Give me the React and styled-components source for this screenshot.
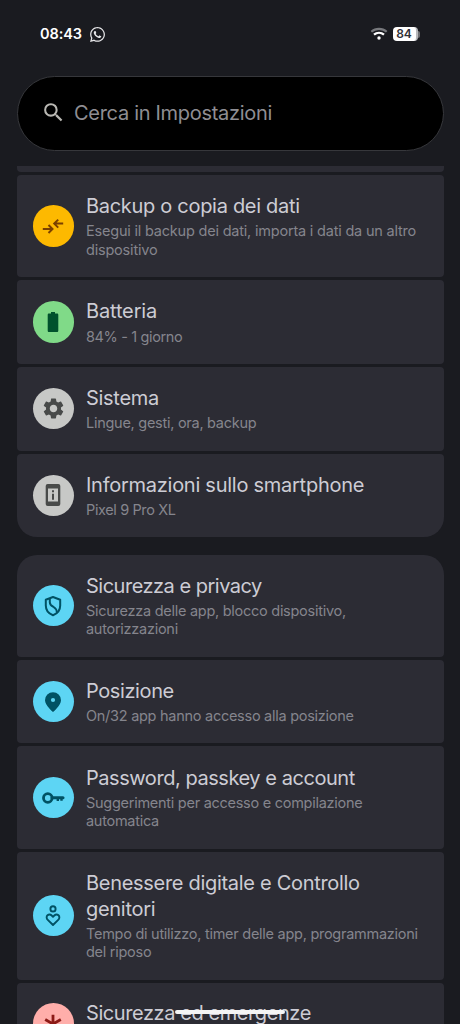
import styled, { createGlobalStyle } from "styled-components";
import { MdSearch, MdSettings } from "react-icons/md";
import { FaWhatsapp } from "react-icons/fa";

const BackupIcon = () => (
  <svg viewBox="0 0 24 24" width="24" height="24" fill="none" stroke="#7a4100" strokeWidth="2">
    <path d="M1.800 15h9.400M7.500 11l4 4-4 4" />
    <path d="M22.200 9.600h-8.800M17.200 5.600l-4 4 4 4" />
  </svg>
);

const BatteryIcon = () => (
  <svg viewBox="0 0 24 24" width="24" height="24" fill="#00522c">
    <path d="M10 2h4v1.600h2c.8 0 1.300.5 1.300 1.300v15.800c0 .8-.5 1.300-1.300 1.300H8c-.8 0-1.300-.5-1.300-1.300V4.900c0-.8.5-1.300 1.300-1.300h2z" />
  </svg>
);

const PhoneIcon = () => (
  <svg viewBox="0 0 24 24" width="24" height="24">
    <rect x="4.700" y="1" width="14.600" height="22" rx="2" fill="#484a49" />
    <path d="M7 5.500h10v13H7z" fill="#c7c8c6" />
    <path d="M11 7.300h2v2h-2zM11 10.800h2v6h-2z" fill="#484a49" />
  </svg>
);

const ShieldIcon = () => (
  <svg viewBox="0 0 24 24" width="24" height="24" fill="none" stroke="#005264" strokeWidth="2">
    <path d="M12 3l7.200 2.800v5.700c0 4.500-3 8.200-7.200 9.700-4.200-1.500-7.200-5.200-7.200-9.700V5.800z" strokeLinejoin="round" />
    <path d="M8.800 4.600v3.600c0 2.800 1.800 3.600 3.800 4.800s3.300 2.600 3.300 5.600" />
  </svg>
);

const PinIcon = () => (
  <svg viewBox="0 0 24 24" width="24" height="24">
    <path d="M12 2.200a8 8 0 0 0-8 8c0 5 8 11.900 8 11.900s8-6.900 8-11.900a8 8 0 0 0-8-8z" fill="#005264" />
    <circle cx="12" cy="10" r="2.100" fill="#5dd5f4" />
  </svg>
);

const KeyIcon = () => (
  <svg viewBox="0 0 24 24" width="24" height="24" fill="none" stroke="#005264">
    <circle cx="6.800" cy="12" r="4.300" strokeWidth="2.800" />
    <path d="M11 11.800h11" strokeWidth="3" strokeLinecap="round" />
    <path d="M16.800 12v2.900M20.500 12v2.700" strokeWidth="2.400" />
  </svg>
);

const WellbeingIcon = () => (
  <svg viewBox="0 0 24 24" width="24" height="24" fill="none" stroke="#005264" strokeWidth="1.900">
    <circle cx="12" cy="4.900" r="2.600" />
    <path
      d="M12 21l-5.200-5.100c-1.500-1.500-1.500-3.500-.3-4.600 1.300-1.200 3-1 4.200.2L12 12.800l1.300-1.300c1.200-1.200 2.900-1.400 4.200-.2 1.200 1.100 1.200 3.100-.3 4.600z"
      strokeLinejoin="round"
    />
  </svg>
);

const EmergencyIcon = () => (
  <svg viewBox="0 0 24 24" width="24" height="24" fill="none" stroke="#8c1a16" strokeWidth="2.800">
    <path d="M12 2.800v18.400M4.200 7.500l15.600 9M19.800 7.500l-15.600 9" />
  </svg>
);

const WifiIcon = () => (
  <svg viewBox="0 0 18 14" width="18" height="14" fill="none">
    <path d="M1.300 4.700C5.700.8 12.300.8 16.700 4.700" stroke="#77787c" strokeWidth="2.200" />
    <path d="M4 7.700C6.900 5.200 11.100 5.200 14 7.700" stroke="#fff" strokeWidth="2.300" />
    <circle cx="9" cy="11" r="1.700" fill="#fff" />
  </svg>
);

const systemItems = [
  {
    title: ["Backup o copia dei dati"],
    text: ["Esegui il backup dei dati, importa i dati da un altro", "dispositivo"],
    color: "#fdb900",
    icon: <BackupIcon />,
    textSpacing: -0.2,
  },
  {
    title: ["Batteria"],
    text: ["84% - 1 giorno"],
    color: "#80da88",
    icon: <BatteryIcon />,
    spacing: -0.15,
    textSpacing: -0.36,
  },
  {
    title: ["Sistema"],
    text: ["Lingue, gesti, ora, backup"],
    color: "#c7c8c6",
    icon: <MdSettings size={25} color="#484a49" />,
  },
  {
    title: ["Informazioni sullo smartphone"],
    text: ["Pixel 9 Pro XL"],
    color: "#c7c8c6",
    icon: <PhoneIcon />,
    spacing: -0.26,
    textSpacing: -0.38,
  },
];

const privacyItems = [
  {
    title: ["Sicurezza e privacy"],
    text: ["Sicurezza delle app, blocco dispositivo,", "autorizzazioni"],
    color: "#5dd5f4",
    icon: <ShieldIcon />,
    spacing: -0.5,
  },
  {
    title: ["Posizione"],
    text: ["On/32 app hanno accesso alla posizione"],
    color: "#5dd5f4",
    icon: <PinIcon />,
    spacing: -0.4,
  },
  {
    title: ["Password, passkey e account"],
    text: ["Suggerimenti per accesso e compilazione", "automatica"],
    color: "#5dd5f4",
    icon: <KeyIcon />,
    spacing: -0.45,
  },
  {
    title: ["Benessere digitale e Controllo", "genitori"],
    text: ["Tempo di utilizzo, timer delle app, programmazioni", "del riposo"],
    color: "#5dd5f4",
    icon: <WellbeingIcon />,
  },
  {
    title: ["Sicurezza ed emergenze"],
    text: [],
    color: "#ffaeaa",
    icon: <EmergencyIcon />,
    spacing: -0.42,
  },
];

const SettingsRow = ({ item }) => {
  const bare = item.text.length === 0;

  return (
    <Row $bare={bare}>
      <IconCircle $color={item.color}>{item.icon}</IconCircle>
      <RowText $bare={bare}>
        {item.title.map((line) => (
          <Title key={line} $spacing={item.spacing}>
            {line}
          </Title>
        ))}
        <Details>
          {item.text.map((line) => (
            <Description key={line} $spacing={item.textSpacing}>
              {line}
            </Description>
          ))}
        </Details>
      </RowText>
    </Row>
  );
};

const App = () => {
  return (
    <Screen>
      <GlobalStyle />
      <StatusBar>
        <Clock>08:43</Clock>
        <FaWhatsapp size={17} color="#e6e6e8" />
        <StatusRight>
          <WifiIcon />
          <Battery>
            <BatteryLevel>84</BatteryLevel>
            <BatteryCap />
          </Battery>
        </StatusRight>
      </StatusBar>

      <SearchBar>
        <MdSearch size={25} color="#b9b8b3" />
        <SearchText>Cerca in Impostazioni</SearchText>
      </SearchBar>

      <List>
        <PreviousRow />
        <Group>
          {systemItems.map((item) => (
            <SettingsRow key={item.title[0]} item={item} />
          ))}
        </Group>
        <Group $first>
          {privacyItems.map((item) => (
            <SettingsRow key={item.title[0]} item={item} />
          ))}
        </Group>
      </List>
      <HomeHandle />
    </Screen>
  );
};

const GlobalStyle = createGlobalStyle`
  * {
    box-sizing: border-box;
  }

  body {
    margin: 0;
    background: #1a1b20;
    overflow: hidden;
  }
`;

const Screen = styled.div`
  position: relative;
  display: flex;
  flex-direction: column;
  width: 460px;
  height: 1024px;
  padding: 0 16.500px;
  overflow: hidden;
  background: #1a1b20;
  font-family: Inter, Roboto, sans-serif;
`;

const StatusBar = styled.div`
  display: flex;
  align-items: center;
  flex: none;
  height: 76px;
  padding: 0 24px 8px 23.500px;
`;

const Clock = styled.div`
  width: 48.500px;
  color: #fff;
  font-size: 14.500px;
  font-weight: 600;
  line-height: 20px;
  letter-spacing: -0.1px;
`;

const StatusRight = styled.div`
  display: flex;
  align-items: center;
  gap: 5px;
  margin-left: auto;
`;

const Battery = styled.div`
  display: flex;
  align-items: center;
`;

const BatteryLevel = styled.div`
  width: 25px;
  height: 14px;
  border-radius: 4px;
  border-right: 2px solid #b9babd;
  background: #fff;
  color: #303136;
  font-size: 12px;
  font-weight: 600;
  line-height: 14px;
  text-align: center;
`;

const BatteryCap = styled.div`
  width: 2px;
  height: 7px;
  border-radius: 0 2px 2px 0;
  background: #6d6e72;
`;

const SearchBar = styled.div`
  display: flex;
  align-items: center;
  flex: none;
  gap: 8px;
  height: 74.500px;
  padding: 0 0 1px 23.500px;
  border: 1px solid #36373b;
  border-radius: 38px;
  background: #000;
`;

const SearchText = styled.div`
  color: #8f8e93;
  font-size: 20px;
  line-height: 26px;
  letter-spacing: -0.3px;
  white-space: nowrap;
`;

const List = styled.div`
  display: flex;
  flex-direction: column;
  flex: 1;
  min-height: 0;
  margin-top: 15.500px;
  overflow: hidden;
`;

const PreviousRow = styled.div`
  flex: none;
  height: 6px;
  margin-bottom: 3px;
  border-radius: 0 0 4px 4px;
  background: #2c2c34;
`;

const Group = styled.div`
  display: flex;
  flex-direction: column;
  flex: none;
  gap: 3px;
  margin-bottom: 17.400px;
  border-radius: ${(p) => (p.$first ? "20px 20px 0 0" : "0 0 20px 20px")};
  overflow: hidden;
`;

const Row = styled.div`
  display: flex;
  align-items: center;
  gap: 12px;
  height: ${(p) => (p.$bare ? "81.5px" : "auto")};
  padding: 0 16px;
  border-radius: 4px;
  background: #2c2c34;
`;

const IconCircle = styled.div`
  display: flex;
  align-items: center;
  justify-content: center;
  flex: none;
  width: 41.500px;
  height: 41.500px;
  border-radius: 50%;
  background: ${(p) => p.$color};
`;

const RowText = styled.div`
  flex: 1;
  align-self: flex-start;
  min-width: 0;
  padding: ${(p) => (p.$bare ? "17px" : "18.2px")} 0 17.800px;
`;

const Title = styled.div`
  color: #cdccd4;
  font-size: 20px;
  line-height: 26px;
  letter-spacing: ${(p) => p.$spacing ?? -0.3}px;
  white-space: nowrap;
`;

const Details = styled.div`
  padding-top: 3.200px;
`;

const Description = styled.div`
  color: #85858d;
  font-size: 14.500px;
  line-height: 18.500px;
  letter-spacing: ${(p) => p.$spacing ?? -0.27}px;
  white-space: nowrap;
`;

const HomeHandle = styled.div`
  position: absolute;
  bottom: 10px;
  left: 175px;
  width: 110px;
  height: 4px;
  border-radius: 2px;
  background: #f4f4f4;
`;

export default App;
